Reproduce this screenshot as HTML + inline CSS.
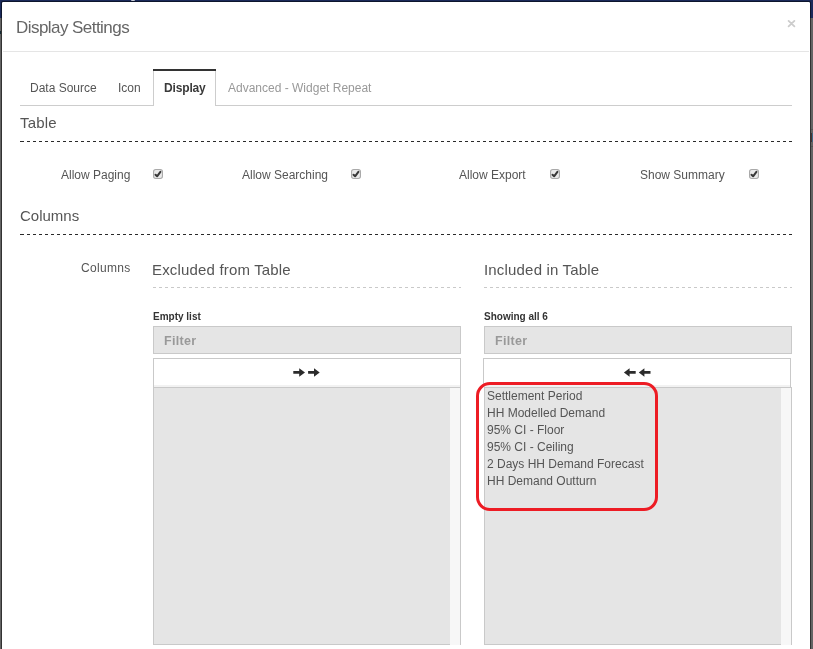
<!DOCTYPE html>
<html>
<head>
<meta charset="utf-8">
<style>
html,body{margin:0;padding:0;width:813px;height:649px;overflow:hidden;background:#646464;font-family:"Liberation Sans",sans-serif;}
.abs{position:absolute;}
.t{position:absolute;white-space:nowrap;line-height:1;will-change:transform;}
#navy{left:0;top:0;width:813px;height:18px;background:#1b2a5a;}
#modal{left:1px;top:1px;width:810px;height:700px;background:#fff;border:1px solid rgba(0,0,0,.5);border-radius:2px;box-sizing:border-box;background-clip:padding-box;}
.hline{position:absolute;height:0;}
.dashd{position:absolute;height:1px;background:repeating-linear-gradient(90deg,#2a2a2a 0 3px,transparent 3px 6px);}
.dashl{position:absolute;height:1px;background:repeating-linear-gradient(90deg,#c9c9c9 0 3px,transparent 3px 6px);}
.cb{position:absolute;width:8px;height:8px;border:1px solid #a8a8a8;border-radius:2px;background:#ececec;}
.cb svg{position:absolute;left:0;top:0;}
.filter{position:absolute;height:28px;box-sizing:border-box;border:1px solid #c9c9c9;background:#e5e5e5;}
.btn{position:absolute;height:29px;box-sizing:border-box;border:1px solid #c9c9c9;border-bottom:none;background:#fff;}
.btn:after{content:'';position:absolute;left:0;right:0;bottom:0;height:2px;background:#f2f2f2;}
.list{position:absolute;box-sizing:border-box;border-left:1px solid #c9c9c9;border-top:1px solid #c9c9c9;background:#e5e5e5;}
.lb{position:absolute;left:0;bottom:0;height:0;border-top:1px solid #c9c9c9;}
.sb{position:absolute;top:0;bottom:0;right:0;width:11px;box-sizing:border-box;border-right:1px solid #c9c9c9;background:#f7f7f7;}
</style>
</head>
<body>
<div id="navy" class="abs"></div>
<div id="modal" class="abs"></div><div class="abs" style="left:131px;top:0;width:4px;height:1px;background:#c8ccd8;border-radius:0 0 2px 2px"></div>
<div class="abs" style="left:0;top:31px;width:1px;height:3px;background:#132a33"></div><div class="abs" style="left:811px;top:129px;width:2px;height:1px;background:#555"></div><div class="abs" style="left:811px;top:146px;width:2px;height:1px;background:#555"></div><div class="abs" style="left:811px;top:133px;width:1px;height:9px;background:#4a3232"></div><div class="abs" style="left:812px;top:133px;width:1px;height:9px;background:#3f6a85"></div>

<!-- header -->
<div class="t" style="left:16px;top:19px;font-size:17px;color:#666;letter-spacing:-0.55px;">Display Settings</div>
<svg class="abs" style="left:786px;top:18px" width="12" height="12" viewBox="0 0 12 12"><path d="M2.6 2.9 L8.4 8.3 M8.4 2.9 L2.6 8.3" stroke="#cccccc" stroke-width="1.8" stroke-linecap="round"/></svg>
<div class="hline" style="left:3px;top:51px;width:806px;border-top:1px solid #e5e5e5;"></div>

<!-- tabs -->
<div class="abs" style="left:153px;top:71px;width:63px;height:35px;box-sizing:border-box;border:1px solid #cdcdcd;border-top:none;border-bottom:none;background:#fff;z-index:2"></div><div class="abs" style="left:153px;top:69px;width:63px;height:2px;background:#333;z-index:2"></div>
<div class="hline" style="left:20px;top:105px;width:772px;border-top:1px solid #cdcdcd;z-index:1"></div>
<div class="t" style="left:30px;top:82px;font-size:12px;color:#555;z-index:3">Data Source</div>
<div class="t" style="left:118px;top:82px;font-size:12px;color:#555;z-index:3">Icon</div>
<div class="t" style="left:164px;top:82px;font-size:12px;color:#3a3a3a;font-weight:700;letter-spacing:-0.15px;z-index:3">Display</div>
<div class="t" style="left:228px;top:82px;font-size:12px;color:#999;z-index:3">Advanced - Widget Repeat</div>

<!-- Table section -->
<div class="t" style="left:20px;top:115px;font-size:15px;color:#555;letter-spacing:0.2px;">Table</div>
<div class="abs" style="left:20px;top:141px;width:4px;height:1px;background:#2a2a2a"></div><div class="dashd" style="left:27px;top:141px;width:765px;"></div>

<div class="t" style="left:61px;top:169px;font-size:12px;color:#555;">Allow Paging</div>
<div class="t" style="left:242px;top:169px;font-size:12px;color:#555;">Allow Searching</div>
<div class="t" style="left:459px;top:169px;font-size:12px;color:#555;">Allow Export</div>
<div class="t" style="left:640px;top:169px;font-size:12px;color:#555;">Show Summary</div>

<svg class="abs" style="left:153px;top:169px" width="10" height="10" viewBox="0 0 10 10"><rect x="0.55" y="0.55" width="8.9" height="8.9" rx="2.2" fill="#e9e9e9" stroke="#a9a9a9" stroke-width="1.1"/><path d="M2.5 5.7 L4.1 7.3 L7.4 2.8" fill="none" stroke="#383838" stroke-width="2" stroke-linecap="round" stroke-linejoin="round"/></svg>
<svg class="abs" style="left:351px;top:169px" width="10" height="10" viewBox="0 0 10 10"><rect x="0.55" y="0.55" width="8.9" height="8.9" rx="2.2" fill="#e9e9e9" stroke="#a9a9a9" stroke-width="1.1"/><path d="M2.5 5.7 L4.1 7.3 L7.4 2.8" fill="none" stroke="#383838" stroke-width="2" stroke-linecap="round" stroke-linejoin="round"/></svg>
<svg class="abs" style="left:550px;top:169px" width="10" height="10" viewBox="0 0 10 10"><rect x="0.55" y="0.55" width="8.9" height="8.9" rx="2.2" fill="#e9e9e9" stroke="#a9a9a9" stroke-width="1.1"/><path d="M2.5 5.7 L4.1 7.3 L7.4 2.8" fill="none" stroke="#383838" stroke-width="2" stroke-linecap="round" stroke-linejoin="round"/></svg>
<svg class="abs" style="left:749px;top:169px" width="10" height="10" viewBox="0 0 10 10"><rect x="0.55" y="0.55" width="8.9" height="8.9" rx="2.2" fill="#e9e9e9" stroke="#a9a9a9" stroke-width="1.1"/><path d="M2.5 5.7 L4.1 7.3 L7.4 2.8" fill="none" stroke="#383838" stroke-width="2" stroke-linecap="round" stroke-linejoin="round"/></svg>

<!-- Columns section -->
<div class="t" style="left:20px;top:208px;font-size:15px;color:#555;">Columns</div>
<div class="abs" style="left:20px;top:234px;width:4px;height:1px;background:#2a2a2a"></div><div class="dashd" style="left:27px;top:234px;width:765px;"></div>

<div class="t" style="left:81px;top:262px;font-size:12px;color:#555;letter-spacing:0.3px;">Columns</div>
<div class="t" style="left:152px;top:262px;font-size:15px;color:#555;letter-spacing:0.17px;">Excluded from Table</div>
<div class="t" style="left:484px;top:262px;font-size:15px;color:#555;letter-spacing:0.18px;">Included in Table</div>
<div class="dashl" style="left:153px;top:287px;width:308px;"></div>
<div class="dashl" style="left:484px;top:287px;width:308px;"></div>

<div class="t" style="left:153px;top:312px;font-size:10px;color:#333;font-weight:700;">Empty list</div>
<div class="t" style="left:484px;top:312px;font-size:10px;color:#333;font-weight:700;">Showing all 6</div>

<div class="filter" style="left:153px;top:326px;width:308px;"></div>
<div class="filter" style="left:484px;top:326px;width:308px;"></div>
<div class="t" style="left:164px;top:335px;font-size:12.5px;color:#999;font-weight:700;letter-spacing:0.3px;">Filter</div>
<div class="t" style="left:495px;top:335px;font-size:12.5px;color:#999;font-weight:700;letter-spacing:0.3px;">Filter</div>

<div class="btn" style="left:153px;top:358px;width:308px;"></div>
<div class="btn" style="left:483px;top:358px;width:308px;"></div>

<svg class="abs" style="left:293px;top:368px" width="28" height="10" viewBox="0 0 28 10"><path d="M0.3 3.1 H6.2 V0.2 L12 4.4 L6.2 8.8 V5.7 H0.3 Z M15.1 3.1 H21 V0.2 L26.7 4.4 L21 8.8 V5.7 H15.1 Z" fill="#2b2b2b"/></svg>
<svg class="abs" style="left:623px;top:368px" width="28" height="10" viewBox="0 0 28 10"><path d="M0.9 4.4 L6.6 0.2 V3.1 H12.7 V5.7 H6.6 V8.8 Z M15.8 4.4 L21.4 0.2 V3.1 H27.5 V5.7 H21.4 V8.8 Z" fill="#2b2b2b"/></svg>
<div class="list" style="left:153px;top:387px;width:308px;height:258px;"><div class="lb" style="width:296px"></div><div class="sb"></div></div>
<div class="list" style="left:484px;top:387px;width:308px;height:258px;"><div class="lb" style="width:296px"></div><div class="sb"></div></div>

<div class="t" style="left:487px;top:388px;font-size:12px;color:#555;line-height:17px;">Settlement Period<br>HH Modelled Demand<br>95% CI - Floor<br>95% CI - Ceiling<br>2 Days HH Demand Forecast<br>HH Demand Outturn</div>

<!-- red highlight -->
<div class="abs" style="left:476px;top:382px;width:182px;height:129px;box-sizing:border-box;border:3px solid #ed1c24;border-radius:14px;"></div>

</body>
</html>
